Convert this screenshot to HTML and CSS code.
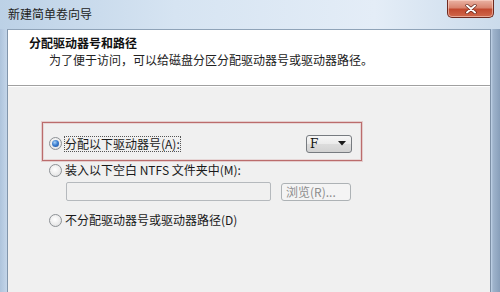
FILE: index.html
```html
<!DOCTYPE html>
<html lang="zh-CN">
<head>
<meta charset="utf-8">
<link rel="stylesheet" href="styles.css">
</head>
<body>
<div class="window">
  <div class="titlebar">
    <span class="title">新建简单卷向导</span>
    <div class="close">
      <svg width="14" height="10" viewBox="0 0 14 10"><path d="M3 1.5 L11 8.5 M11 1.5 L3 8.5" stroke="#5a1a10" stroke-width="3.2" stroke-linecap="round"/><path d="M3 1.5 L11 8.5 M11 1.5 L3 8.5" stroke="#ffffff" stroke-width="2" stroke-linecap="round"/></svg>
    </div>
  </div>
  <div class="body">
    <div class="client">
      <div class="header">
        <div class="h-title">分配驱动器号和路径</div>
        <div class="h-sub">为了便于访问，可以给磁盘分区分配驱动器号或驱动器路径。</div>
      </div>
      <div class="panel">
        <div class="highlight">
          <div class="row">
            <span class="radio checked"></span>
            <span class="label focus">分配以下驱动器号(A):</span>
          </div>
          <div class="combo">
            <span class="combo-val">F</span>
            <svg width="8" height="5" viewBox="0 0 8 5"><path d="M0 0 H8 L4 4.5 Z" fill="#1a1a1a"/></svg>
          </div>
        </div>
        <div class="row plain">
          <span class="radio"></span>
          <span class="label">装入以下空白 NTFS 文件夹中(M):</span>
        </div>
        <div class="inputrow">
          <div class="input"></div>
          <div class="btn">浏览(R)...</div>
        </div>
        <div class="row plain row3">
          <span class="radio"></span>
          <span class="label">不分配驱动器号或驱动器路径(D)</span>
        </div>
      </div>
    </div>
  </div>
</div>
</body>
</html>
```

FILE: styles.css
```css
* { box-sizing: border-box; }
html, body { margin: 0; padding: 0; }
body {
  width: 500px;
  height: 292px;
  overflow: hidden;
  font-family: "Noto Sans CJK SC", "Noto Sans", sans-serif;
  font-size: 12px;
  color: #1a1a1a;
  background: #c9daec;
}
.window {
  width: 500px;
  height: 292px;
  display: flex;
  flex-direction: column;
  background: linear-gradient(90deg, #bcd1e6 0%, #d6e4f2 35%, #e4edf7 75%, #cbdbeb 100%);
}
.titlebar {
  height: 29px;
  flex: none;
  display: flex;
  align-items: flex-start;
  justify-content: space-between;
  padding-left: 8px;
  padding-right: 6px;
}
.title {
  margin-top: 6px;
  line-height: 16px;
  font-size: 12px;
  color: #222;
}
.close {
  width: 47px;
  height: 18px;
  border: 1px solid #6e2a20;
  border-top: none;
  border-radius: 0 0 5px 5px;
  background: linear-gradient(180deg, #eab3a4 0%, #d98570 45%, #c24a30 55%, #d0684c 100%);
  box-shadow: inset 0 0 0 1px rgba(255,220,210,0.55);
  display: flex;
  align-items: center;
  justify-content: center;
}
.body {
  flex: 1;
  display: flex;
  padding: 0 9px 0 7px;
  background: linear-gradient(90deg, #aec4dc 0px, #c3d5e9 7px, #c3d5e9 491px, #9fb4cc 493px, #889fba 500px);
}
.client {
  flex: 1;
  display: flex;
  flex-direction: column;
  border-left: 1px solid #8195ab;
  border-right: 1px solid #7d90a6;
  border-top: 1px solid #8fa3b8;
  background: #f0f0f0;
}
.header {
  height: 56px;
  flex: none;
  background: #ffffff;
  border-bottom: 1px solid #a0a0a0;
  box-shadow: 0 1px 0 #ffffff;
  padding: 5px 0 0 21px;
}
.h-title {
  font-weight: bold;
  line-height: 16px;
  color: #111;
}
.h-sub {
  margin-top: 1px;
  padding-left: 20px;
  line-height: 16px;
  color: #222;
}
.panel {
  flex: 1;
  display: flex;
  flex-direction: column;
  padding-top: 36px;
}
.highlight {
  margin-left: 34px;
  width: 320px;
  height: 39px;
  border: 1px solid #bb6c6c;
  box-shadow: 0 0 0 1px rgba(205, 140, 140, 0.35), inset 0 0 0 1px rgba(205, 140, 140, 0.25);
  display: flex;
  align-items: center;
  justify-content: space-between;
  padding: 4px 9px 0 6px;
}
.row {
  display: flex;
  align-items: center;
  height: 14px;
}
.plain { margin-left: 41px; }
.row > .label { margin-left: 3px; line-height: 14px; }
.focus { outline: 1px dotted #555; outline-offset: 0; }
.highlight + .row { margin-top: 2px; }
.row3 { margin-top: 12px; }
.radio {
  width: 13px;
  height: 13px;
  border-radius: 50%;
  border: 1px solid #8d9195;
  background: radial-gradient(circle at 45% 40%, #ffffff 0%, #ececec 55%, #d4d6d8 100%);
  flex: none;
  display: flex;
  align-items: center;
  justify-content: center;
}
.radio.checked::after {
  content: "";
  width: 7px;
  height: 7px;
  border-radius: 50%;
  background: radial-gradient(circle at 40% 35%, #a8d2f8 0%, #3c7fd0 45%, #1b4c9a 100%);
}
.combo {
  width: 46px;
  height: 18px;
  border: 1px solid #777b80;
  border-radius: 3px;
  background: linear-gradient(180deg, #f6f6f6 0%, #ebebeb 48%, #dcdcdc 52%, #d2d2d2 100%);
  display: flex;
  align-items: center;
  justify-content: space-between;
  padding: 0 5px 0 3px;
}
.combo-val {
  font-family: "DejaVu Serif", "Liberation Serif", serif;
  font-size: 12px;
  line-height: 14px;
  color: #111;
}
.inputrow {
  display: flex;
  align-items: center;
  margin-top: 5px;
  margin-left: 58px;
}
.input {
  width: 205px;
  height: 19px;
  border: 1px solid #b5b9bd;
  border-radius: 2px;
  background: #f0f0f0;
}
.btn {
  margin-left: 10px;
  width: 70px;
  height: 18px;
  border: 1px solid #adb2b5;
  border-radius: 3px;
  background: #f4f4f4;
  color: #8d8d8d;
  font-size: 12px;
  line-height: 16px;
  padding-left: 4px;
}
```
